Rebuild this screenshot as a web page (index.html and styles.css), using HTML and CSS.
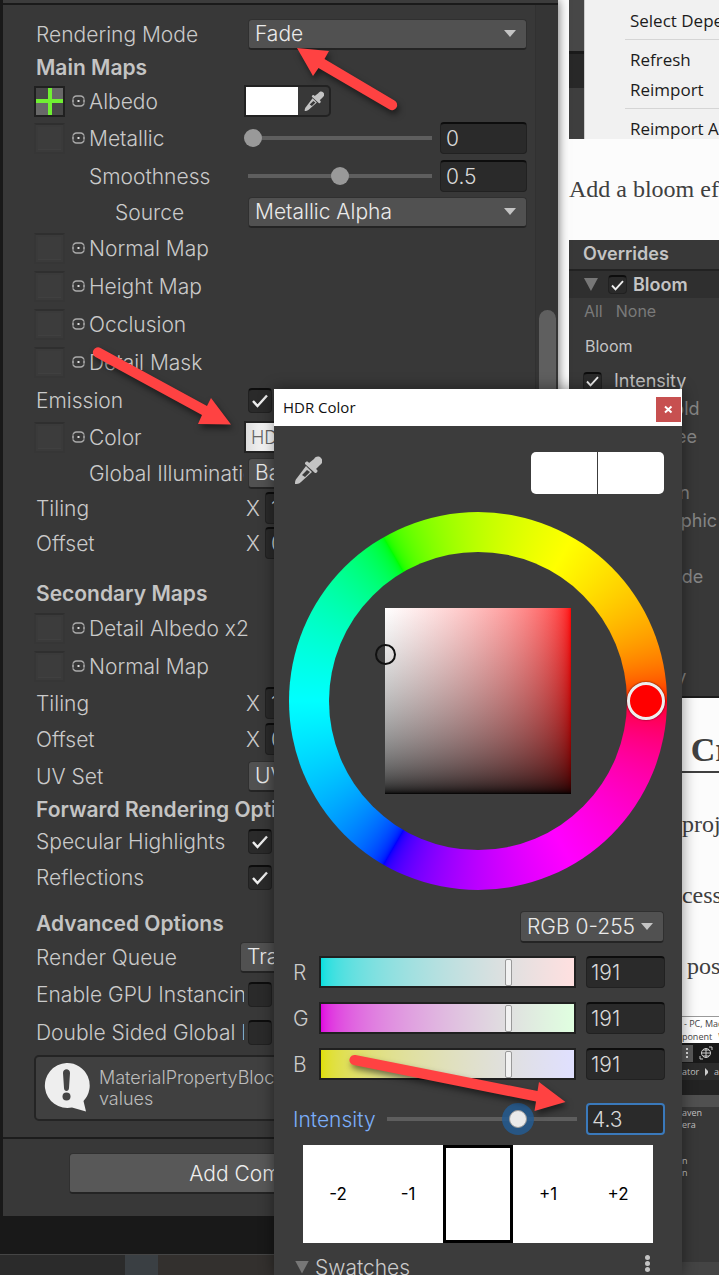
FILE: index.html
```html
<!DOCTYPE html>
<html lang="en">
<head>
<meta charset="utf-8">
<title>Material inspector</title>
<link rel="stylesheet" href="styles.css">
</head>
<body>
<svg class="defs" width="0" height="0" aria-hidden="true">
  <symbol id="dropper" viewBox="0 0 28 28">
    <path fill="#c4c4c4" d="M20 3c2-3 5-3 7-1s2 5-1 7l-4 4c2 1 2 3 0 4l-1 0L11 8l0-1c1-2 3-2 4 0z"/>
    <path fill="#c4c4c4" fill-rule="evenodd" d="M12 10l6 6L7 26c-2 2-4 2-6 2 0-2 0-4 2-6zM13 14l-5 5 3 2 5-5z"/>
  </symbol>
  <symbol id="picker" viewBox="0 0 13 12">
    <rect x="1" y="1" width="11" height="10" rx="3.500" fill="none" stroke="#aaa" stroke-width="1.6"/>
    <path d="M1 3.500v1M1 7.500v1M12 3.500v1M12 7.500v1" stroke="#555" stroke-width="2"/>
    <rect x="5.5" y="5" width="2" height="2" fill="#ddd"/>
  </symbol>
</svg>
<main class="screen">
  <section class="inspector">
    <div class="top-edge"></div>
    <div class="pane">
      <form class="props">
        <div class="row"><label class="name" for="mode">Rendering Mode</label><div class="field"><select id="mode" class="drop"><option>Fade</option></select></div></div>
        <h2 class="row">Main Maps</h2>
        <div class="row mid"><div class="name"><button type="button" class="tex filled" aria-label="Albedo texture"></button><svg class="pick"><use href="#picker"/></svg>Albedo</div>
          <div class="field flush"><div class="color"><button type="button" class="chip" aria-label="Albedo color"></button><button type="button" class="dropper" aria-label="Pick color"><svg width="20" height="20"><use href="#dropper"/></svg></button></div></div></div>
        <div class="row tall"><label class="name" for="metal"><span class="tex"></span><svg class="pick"><use href="#picker"/></svg>Metallic</label>
          <div class="field flush"><input id="metal" class="slider" type="range" min="0" max="1" step="0.1" value="0"><input class="num" type="text" value="0" aria-label="Metallic value"></div></div>
        <div class="row tall"><label class="name in1" for="smooth">Smoothness</label>
          <div class="field flush"><input id="smooth" class="slider" type="range" min="0" max="1" step="0.1" value="0.5"><input class="num" type="text" value="0.5" aria-label="Smoothness value"></div></div>
        <div class="row"><label class="name in2" for="source">Source</label><div class="field"><select id="source" class="drop"><option>Metallic Alpha</option></select></div></div>
        <div class="row tall"><div class="name full"><button type="button" class="tex" aria-label="Normal map texture"></button><svg class="pick"><use href="#picker"/></svg>Normal Map</div></div>
        <div class="row tall"><div class="name full"><button type="button" class="tex" aria-label="Height map texture"></button><svg class="pick"><use href="#picker"/></svg>Height Map</div></div>
        <div class="row tall"><div class="name full"><button type="button" class="tex" aria-label="Occlusion texture"></button><svg class="pick"><use href="#picker"/></svg>Occlusion</div></div>
        <div class="row tall"><div class="name full"><button type="button" class="tex" aria-label="Detail mask texture"></button><svg class="pick"><use href="#picker"/></svg>Detail Mask</div></div>
        <div class="row tall"><label class="name" for="emission">Emission</label><div class="field"><input id="emission" class="check" type="checkbox" checked></div></div>
        <div class="row mid"><div class="name"><button type="button" class="tex" aria-label="Emission texture"></button><svg class="pick"><use href="#picker"/></svg>Color</div>
          <div class="field flush"><div class="color"><button type="button" class="chip hdr">HDR</button></div></div></div>
        <div class="row mid"><label class="name in1" for="gi">Global Illumination</label><div class="field"><select id="gi" class="drop"><option>Baked</option></select></div></div>
        <div class="row"><span class="name">Tiling</span><div class="field vec"><label for="tx">X</label><input id="tx" class="num" type="text" value="1"></div></div>
        <div class="row mid"><span class="name">Offset</span><div class="field vec"><label for="ox">X</label><input id="ox" class="num" type="text" value="0"></div></div>
        <h2 class="row section">Secondary Maps</h2>
        <div class="row tall"><div class="name full"><button type="button" class="tex" aria-label="Detail albedo texture"></button><svg class="pick"><use href="#picker"/></svg>Detail Albedo x2</div></div>
        <div class="row tall"><div class="name full"><button type="button" class="tex" aria-label="Secondary normal texture"></button><svg class="pick"><use href="#picker"/></svg>Normal Map</div></div>
        <div class="row mid"><span class="name">Tiling</span><div class="field vec"><label for="tx2">X</label><input id="tx2" class="num" type="text" value="1"></div></div>
        <div class="row mid"><span class="name">Offset</span><div class="field vec"><label for="ox2">X</label><input id="ox2" class="num" type="text" value="0"></div></div>
        <div class="row tall"><label class="name" for="uv">UV Set</label><div class="field"><select id="uv" class="drop"><option>UV0</option></select></div></div>
        <h2 class="row tight">Forward Rendering Options</h2>
        <div class="row mid"><label class="name" for="spec">Specular Highlights</label><div class="field"><input id="spec" class="check" type="checkbox" checked></div></div>
        <div class="row mid"><label class="name" for="refl">Reflections</label><div class="field"><input id="refl" class="check" type="checkbox" checked></div></div>
        <h2 class="row near">Advanced Options</h2>
        <div class="row mid"><label class="name short" for="queue">Render Queue</label><div class="field flush"><select id="queue" class="drop"><option>Transparent</option></select></div></div>
        <div class="row tall"><label class="name" for="gpu">Enable GPU Instancing</label><div class="field"><input id="gpu" class="check" type="checkbox"></div></div>
        <div class="row tall"><label class="name" for="dsgi">Double Sided Global Illumination</label><div class="field"><input id="dsgi" class="check" type="checkbox"></div></div>
        <div class="help">
          <svg width="48" height="50" viewBox="0 0 48 50"><path fill="#eee" d="M23.500 1A22.500 22.500 0 1 0 29 45.500L43 49.500 40.500 39A22.500 22.500 0 0 0 23.500 1z"/><path fill="#444" d="M20 11c0-5 7-5 7 0l-1 15c0 4-5 4-5 0z"/><circle cx="23.500" cy="34.500" r="4" fill="#444"/></svg>
          <p>MaterialPropertyBlock is used to modify these values</p>
        </div>
        <div class="add"><button type="button" class="add-btn">Add Component</button></div>
      </form>
      <div class="scroll"><div class="thumb"></div></div>
    </div>
    <div class="dock"></div>
    <div class="taskbar"><span></span><span></span><span></span></div>
  </section>

  <article class="article">
    <div class="shot menu-shot">
      <div class="strip"><i></i><i></i><i></i></div>
      <ul class="menu"><li>Select Dependencies</li><li class="sep">Refresh</li><li>Reimport</li><li class="sep">Reimport All</li></ul>
    </div>
    <p class="lead">Add a bloom effect</p>
    <div class="shot overrides">
      <h3>Overrides</h3>
      <div class="ov-head"><span class="tri"></span><input id="bloom" class="check small" type="checkbox" checked><label for="bloom">Bloom</label></div>
      <div class="allnone"><a href="#all">All</a><a href="#none">None</a></div>
      <div class="ov-group">Bloom</div>
      <ul class="ov-list">
        <li class="on"><input id="bi" class="check small" type="checkbox" checked><label for="bi">Intensity</label></li>
        <li>Threshold</li><li>Soft Knee</li><li class="skip">Diffusion</li><li>Anamorphic</li><li class="skip">Fast Mode</li><li class="skip far">Intensity</li>
      </ul>
    </div>
    <h1 class="title">- Creating</h1>
    <p class="para">project</p>
    <p class="para">cessing</p>
    <p class="para post">post</p>
    <div class="shot editor">
      <div class="ed-title">- PC, Mac &amp; Linux</div>
      <div class="ed-menu"><span>ponent</span><span>Window</span></div>
      <div class="ed-tools"><svg width="37" height="17" viewBox="0 0 37 17"><path fill="#585858" d="M0 0h11v17H0z"/><path stroke="#ddd" stroke-dasharray="2 2" d="M5 3v11" stroke-width="2"/><g fill="none" stroke="#ccc"><circle cx="24" cy="8" r="4.500"/><path d="M19.500 8h9M24 3v10M21 5h6M21 11h6M27 2h3v3M18 11v3h3"/></g></svg></div>
      <div class="ed-tab"><span>ator</span><svg width="5" height="8"><path fill="#ccc" d="M0 0l4 4-4 4z"/></svg><span>a</span></div>
      <div class="ed-band"></div>
      <ul class="ed-tree"><li>aven</li><li>era</li></ul>
      <ul class="ed-tree lower"><li>n</li><li>n</li></ul>
      <div class="ed-foot"></div>
    </div>
  </article>

  <section class="dialog" aria-label="HDR Color">
    <header class="bar"><span>HDR Color</span><button type="button" class="close" aria-label="Close"><svg width="9" height="9" viewBox="0 0 9 9"><path stroke="#fff" stroke-width="2" d="M1 1.500l6.500 6M7.500 1.500l-6.500 6"/></svg></button></header>
    <div class="pickrow">
      <button type="button" class="dropper" aria-label="Eyedropper"><svg width="28" height="28"><use href="#dropper"/></svg></button>
      <div class="compare"><span></span><span></span></div>
    </div>
    <div class="wheel"><div class="hole"><div class="sv"><span class="sv-mark"></span></div></div><span class="hue-mark"></span></div>
    <div class="space"><select class="drop" aria-label="Color mode"><option>RGB 0-255</option></select></div>
    <div class="channel"><label for="r">R</label><input id="r" class="grad r" type="range" min="0" max="255" value="191"><input class="num" type="text" value="191" aria-label="Red"></div>
    <div class="channel"><label for="g">G</label><input id="g" class="grad g" type="range" min="0" max="255" value="191"><input class="num" type="text" value="191" aria-label="Green"></div>
    <div class="channel"><label for="b">B</label><input id="b" class="grad b" type="range" min="0" max="255" value="191"><input class="num" type="text" value="191" aria-label="Blue"></div>
    <div class="intensity"><label for="int">Intensity</label><input id="int" class="slider active" type="range" min="0" max="100" value="70"><input class="num focus" type="text" value="4.3" aria-label="Intensity value"></div>
    <div class="stops"><button type="button">-2</button><button type="button">-1</button><button type="button" class="now" aria-label="Current"></button><button type="button">+1</button><button type="button">+2</button></div>
    <div class="swatches"><span class="tri"></span><span>Swatches</span><button type="button" class="kebab" aria-label="Swatch menu"><i></i><i></i><i></i></button></div>
  </section>

  <svg class="arrows" width="719" height="1275" viewBox="0 0 719 1275" aria-hidden="true">
    <g fill="#ff4242">
      <path d="M297 48l32 3-4.500 8L394.500 100.500a5 5 0 0 1-5 9L318.500 68 313 76z"/>
      <path d="M231 424.500l-33-.5 4-9L95.500 357a5 5 0 0 1 5-9L207 406l4-8z"/>
      <path d="M565.500 1102l-31 9 1.500-9.500L353.500 1065a5 5 0 0 1 2-10L537.500 1091l1.500-9z"/>
    </g>
  </svg>
</main>
</body>
</html>
```

FILE: styles.css
```css
* { box-sizing: border-box; }
body { margin: 0; background: #fcfcfc; font-family: Inter, "Liberation Sans", sans-serif; font-size: 21px; font-weight: 300; color: #cacaca; }
h1, h2, h3, p, ul { margin: 0; padding: 0; font-weight: inherit; font-size: inherit; list-style: none; }
button, input, select { font: inherit; color: inherit; margin: 0; padding: 0; border: 0; background: none; border-radius: 0; }
a { color: inherit; text-decoration: none; }
.defs { position: absolute; }

.screen { position: relative; display: flex; height: 100vh; overflow: hidden; }
.inspector { flex: 1; min-width: 0; display: flex; flex-direction: column; background: #191919; box-shadow: 0 0 10px rgba(0,0,0,.6); z-index: 1; }
.top-edge { flex: none; height: 5px; margin-left: 3px; background: #3c3c3c; border-bottom: 2px solid #1a1a1a; }
.pane { flex: none; display: flex; margin-left: 3px; background: #383838; }
.props { flex: 1; min-width: 0; padding-top: 12px; }
.scroll { flex: 0 0 23px; display: flex; flex-direction: column; padding: 305px 2px 0 3px; background: #353535; border-left: 1px solid #313131; }
.thumb { flex: 1; background: #5f5f5f; border-radius: 9px 9px 0 0; }
.dock { height: 38px; flex: none; }
.taskbar { flex: 1; display: flex; border-top: 1px solid #454545; background: #33302e; }
.taskbar span:first-child { width: 125px; background: #2b2b2b; }
.taskbar span:nth-child(2) { width: 33px; background: #3a3f43; }

.row { display: flex; align-items: center; height: 34px; padding: 0 8px 0 31px; }
.row.mid { height: 36px; }
.row.tall { height: 38px; }
h2.row { height: 32px; padding-left: 33px; font-weight: 600; color: #c4c4c4; white-space: nowrap; overflow: hidden; }
h2.section { margin-top: 16px; }
h2.near { margin-top: 12px; }
h2.tight { height: 28px; }
.name { flex: 0 0 210px; display: flex; align-items: center; height: 34px; padding-left: 2px; overflow: hidden; white-space: nowrap; }
.name.full { flex: 1; }
.name.short { flex-basis: 206px; }
.name:has(.tex) { padding-left: 0; }
.name.in1 { padding-left: 55px; }
.name.in2 { padding-left: 81px; }
.field { flex: 1; min-width: 0; display: flex; align-items: center; gap: 4px; padding-left: 4px; }
.field.flush { padding-left: 0; }
.vec { padding-left: 2px; gap: 5px; }

.tex { flex: none; width: 31px; height: 31px; border: 2px solid #363636; border-top-color: #2f2f2f; background: #3c3c3c; box-shadow: inset 0 0 0 2px #3a3a3a, inset 0 -3px #404040; }
.tex.filled { border-color: #202020; box-shadow: none; background:
  linear-gradient(#70f032, #70f032) center / 4px 100% no-repeat,
  linear-gradient(#70f032, #70f032) center / 100% 4px no-repeat,
  conic-gradient(#686868 25%, #474747 0 50%, #686868 0 75%, #474747 0); }
.pick { flex: none; width: 13px; height: 12px; margin: 0 4px 0 7px; }

.drop { appearance: none; width: 100%; height: 31px; padding: 0 24px 0 6px; border: 1px solid #303030; border-bottom: 2px solid #242424; border-radius: 4px; color: #eaeaea;
  background: #515151 url("data:image/svg+xml,%3Csvg xmlns='http://www.w3.org/2000/svg' width='12' height='8'%3E%3Cpath fill='%23c4c4c4' d='M0 0h12L6 7z'/%3E%3C/svg%3E") right 10px center no-repeat; }
.num { width: 87px; height: 32px; flex: none; padding: 0 5px; border: 1px solid #212121; border-top: 2px solid #0d0d0d; border-radius: 4px; background: #2a2a2a; color: #d8d8d8; }
.slider { appearance: none; flex: 1; min-width: 0; height: 20px; background: linear-gradient(#5e5e5e, #5e5e5e) center / calc(100% - 8px) 4px no-repeat; }
.slider::-webkit-slider-thumb { appearance: none; width: 18px; height: 18px; border-radius: 50%; background: #999; }
.slider.active::-webkit-slider-thumb { background: #eaeaea; border: 1px solid #999; box-shadow: 0 0 0 7px rgba(35,90,145,.85); }
.slider.active { height: 32px; }
.check { appearance: none; flex: none; width: 24px; height: 25px; border: 1px solid #212121; border-top: 2px solid #0d0d0d; border-radius: 4px; background: #2a2a2a center / 16px 14px no-repeat; }
.check:checked { background-image: url("data:image/svg+xml,%3Csvg xmlns='http://www.w3.org/2000/svg' viewBox='0 0 16 14'%3E%3Cpath fill='none' stroke='%23eee' stroke-width='2.4' d='M1 7l4.500 5L15 1.500'/%3E%3C/svg%3E"); }
.check.small { width: 19px; height: 19px; background-size: 13px 11px; }

.color { display: flex; width: 87px; height: 32px; border: 2px solid #222; border-radius: 0 5px 5px 0; }
.chip { flex: 0 0 52px; background: #fff; }
.dropper { flex: 1; display: flex; align-items: center; justify-content: center; }
.chip.hdr { flex: 1; padding-left: 5px; text-align: left; font-size: 18px; color: #666; background: linear-gradient(90deg, #ddd, #fff 30%); }

.help { display: flex; margin: 4px 8px 0 31px; height: 66px; padding: 5px 6px 0 7px; gap: 8px; border: 2px solid #242424; border-radius: 5px; background: #404040; }
.help svg { flex: none; }
.help p { padding-top: 5px; font-size: 18px; line-height: 21px; color: #bcbcbc; }
.add { display: flex; justify-content: center; margin-top: 16px; padding: 14px 16px 22px; border-top: 2px solid #1c1c1c; }
.add-btn { width: 400px; height: 41px; border: 1px solid #303030; border-bottom: 2px solid #242424; border-radius: 4px; background: #585858; color: #eee; }

.article { flex: 0 0 22.4%; min-width: 0; padding-left: 11px; overflow: hidden; white-space: nowrap; font-family: "Liberation Serif", serif; font-size: 24px; font-weight: 400; color: #404040; }
.shot { font-family: Inter, sans-serif; color: #c4c4c4; overflow: hidden; }
.menu-shot { display: flex; height: 139px; background: #f1f1f1; }
.strip { flex: 0 0 16px; display: flex; flex-direction: column; border-right: 1px solid #ccc; background: #3e3e3e; }
.strip i { height: 65px; background: #474747; }
.strip i:nth-child(2) { height: 45px; background: #282828; border-top: 3px solid #1a1a1a; }
.strip i:nth-child(3) { background: #3e3e3e; }
.menu { margin-left: 40px; flex: 1; padding-top: 6px; font: 17px/30px "Open Sans", "Noto Sans", sans-serif; color: #1c1c1c; }
.menu li { padding-left: 5px; }
.menu .sep { margin-top: 3px; padding-top: 5px; border-top: 1px solid #d5d5d5; }
.lead { height: 101px; line-height: 101px; }
.overrides { height: 458px; background: #383838; border-bottom: 2px solid #1c1c1c; font-size: 18px; }
.overrides h3 { height: 31px; padding: 2px 14px; line-height: 23px; font-weight: 600; border-bottom: 2px solid #222; }
.ov-head { display: flex; align-items: center; height: 27px; padding-left: 15px; gap: 6px; background: #2f2f2f; font-size: 18px; font-weight: 600; }
.tri { flex: none; width: 14px; height: 13px; background: #777; clip-path: polygon(0 0, 100% 0, 50% 100%); }
.ov-head .tri { margin-right: 4px; }
.allnone { display: flex; gap: 13px; height: 26px; padding-left: 15px; line-height: 26px; font-size: 16px; color: #7a7a7a; }
.ov-group { padding: 9px 16px 8px; line-height: 26px; font-size: 16px; }
.ov-list li { height: 28px; line-height: 28px; padding-left: 45px; color: #858585; }
.ov-list li.on { display: flex; align-items: center; gap: 12px; padding-left: 14px; color: #c4c4c4; }
.ov-list li.skip { margin-top: 28px; }
.ov-list li.far { margin-top: 72px; }
.title { height: 75px; padding-left: 102px; line-height: 104px; font-size: 34px; font-weight: 700; border-bottom: 2px solid #404040; }
.para { padding-left: 113px; height: 71px; line-height: 103px; }
.para.post { padding-left: 118px; }
.editor { margin-top: 30px; height: 259px; background: #383838; font: 9px/13px "Open Sans", sans-serif; }
.editor > * { padding-left: 113px; }
.editor .ed-title { height: 14px; padding-left: 115px; border-top: 1px solid #999; background: #fff; color: #444; }
.ed-menu { display: flex; gap: 6px; height: 13px; background: #fff; color: #444; }
.ed-tools { height: 20px; padding-top: 2px; background: #191919; }
.ed-tab { display: flex; align-items: center; gap: 6px; height: 17px; background: #2b2b2b; }
.ed-band { height: 27px; border-top: 15px solid #232323; background: #505050; }
.ed-tree { height: 48px; line-height: 12px; }
.ed-tree.lower { height: 107px; }
.ed-foot { height: 16px; background: #444; }

.dialog { position: absolute; z-index: 2; left: 274px; top: 389px; width: 408px; bottom: 0; overflow: hidden; background: #3c3c3c; box-shadow: 0 0 14px rgba(0,0,0,.45); }
.bar { display: flex; justify-content: space-between; height: 37px; padding: 8px 1px 0 9px; background: #fff; color: #111; font: 15px/21px "Open Sans", "Noto Sans", sans-serif; }
.close { display: grid; place-items: center; width: 25px; height: 25px; background: #c75050; }
.pickrow { display: flex; justify-content: space-between; padding: 26px 18px 0 20px; }
.pickrow .dropper { flex: none; height: 36px; }
.compare { display: flex; gap: 1px; width: 133px; height: 42px; border-radius: 5px; overflow: hidden; }
.compare span { flex: 1; background: #fff; }
.wheel { position: relative; width: 378px; height: 378px; margin: 18px 0 0 15px; padding: 40px; border-radius: 50%; background: conic-gradient(from 90deg in srgb-linear, #f00, #f0f, #00f, #0ff, #0f0, #ff0, #f00); }
.hole { height: 100%; display: grid; place-items: center; border-radius: 50%; background: #3c3c3c; }
.sv { position: relative; width: 186px; height: 186px; background: linear-gradient(in srgb-linear, #fff, #000), linear-gradient(90deg in srgb-linear, #fff, #f00); background-blend-mode: multiply; }
.sv-mark { position: absolute; left: -10px; top: 36px; width: 21px; height: 21px; border: 2px solid #111; border-radius: 50%; }
.hue-mark { position: absolute; right: 2px; top: 170px; width: 38px; height: 38px; border: 3px solid #eee; border-radius: 50%; background: #f00; box-shadow: 0 0 2px #400; }
.space { display: flex; justify-content: flex-end; padding: 21px 18px 6px; }
.space .drop { width: 144px; height: 32px; }
.channel { display: grid; grid-template-columns: 26px 1fr 79px; align-items: center; height: 46px; padding: 0 17px 0 19px; }
.channel .num, .intensity .num { width: 79px; padding: 0 4px; }
.grad { appearance: none; height: 32px; width: calc(100% - 10px); border: 2px solid #202020; }
.grad::-webkit-slider-thumb { appearance: none; width: 7px; height: 27px; border: 1px solid #999; border-radius: 2px; background: #f2f2f2; }
.grad.r { background: linear-gradient(90deg in srgb-linear, #00e0e0, #ffe0e0); }
.grad.g { background: linear-gradient(90deg in srgb-linear, #e000e0, #e0ffe0); }
.grad.b { background: linear-gradient(90deg in srgb-linear, #e0e000, #e0e0ff); }
.intensity { display: flex; align-items: center; height: 54px; padding: 10px 17px 0 19px; gap: 5px; color: #7baefa; }
.intensity .num.focus { border: 2px solid #3a79bb; }
.intensity label { flex: 0 0 85px; }
.stops { display: flex; margin: 4px 29px 0; height: 98px; background: #fff; color: #000; font-size: 17px; font-weight: 400; }
.stops button { flex: none; width: 20%; }
.stops .now { border: 3px solid #000; }
.swatches { display: flex; align-items: center; gap: 6px; height: 48px; padding: 0 32px 0 21px; }
.kebab { display: grid; gap: 1px; margin: -8px 0 0 auto; }
.kebab i { width: 5px; height: 5px; border-radius: 50%; background: #c4c4c4; }

.arrows { position: absolute; z-index: 3; left: 0; top: 0; pointer-events: none; filter: drop-shadow(2px 4px 3px rgba(0,0,0,.5)); }
```
